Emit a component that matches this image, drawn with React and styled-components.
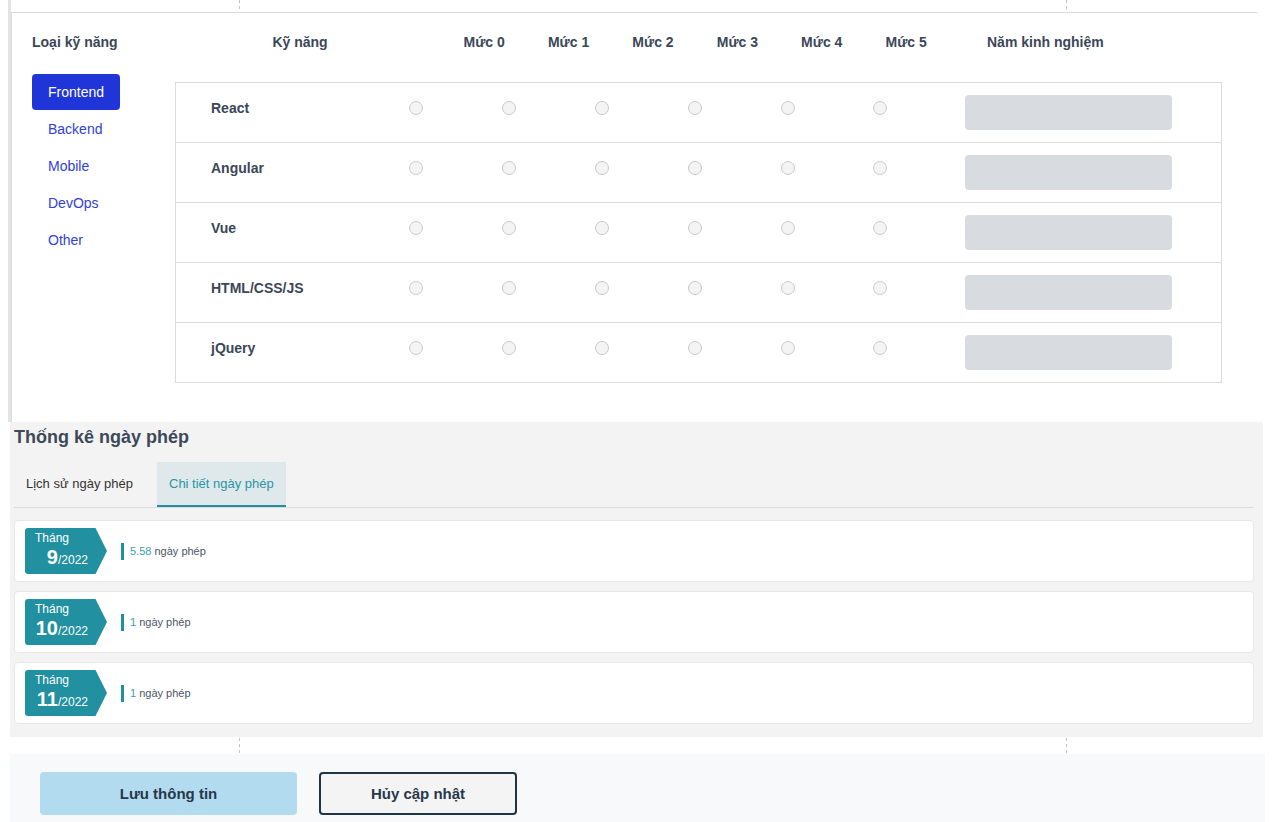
import styled, { createGlobalStyle } from 'styled-components';

const GlobalStyle = createGlobalStyle`
  body {
    margin: 0;
    background: #fff;
    font-family: "Liberation Sans", Arial, sans-serif;
    color: #3b4758;
  }
`;

const skills = ['React', 'Angular', 'Vue', 'HTML/CSS/JS', 'jQuery'];
const categories = ['Frontend', 'Backend', 'Mobile', 'DevOps', 'Other'];
const levels = [0, 1, 2, 3, 4, 5];
const months = [
  { month: 9, days: '5.58' },
  { month: 10, days: '1' },
  { month: 11, days: '1' },
];

const App = () => {
  return (
    <Page>
      <GlobalStyle />
      <SkillPanel>
        <SkillCard>
          <HeaderRow>
            <HeadCell $left>Loại kỹ năng</HeadCell>
            <HeadCell $pad>Kỹ năng</HeadCell>
            {levels.map((l) => (
              <HeadCell key={l}>Mức {l}</HeadCell>
            ))}
            <HeadCell>Năm kinh nghiệm</HeadCell>
          </HeaderRow>
          <Body>
            <Nav>
              {categories.map((c, i) => (
                <NavItem key={c} $active={i === 0}>{c}</NavItem>
              ))}
            </Nav>
            <Table>
              {skills.map((s) => (
                <Row key={s}>
                  <SkillName>{s}</SkillName>
                  {levels.map((l) => (
                    <RadioCell key={l}>
                      <Radio />
                    </RadioCell>
                  ))}
                  <InputCell>
                    <YearInput disabled />
                  </InputCell>
                </Row>
              ))}
            </Table>
          </Body>
        </SkillCard>
      </SkillPanel>

      <LeaveSection>
        <Title>Thống kê ngày phép</Title>
        <Tabs>
          <Tab>Lịch sử ngày phép</Tab>
          <Tab $active>Chi tiết ngày phép</Tab>
        </Tabs>
        <MonthList>
          {months.map((m) => (
            <MonthCard key={m.month}>
              <Badge>
                <BadgeLabel>Tháng</BadgeLabel>
                <BadgeDate>
                  <strong>{m.month}</strong>/2022
                </BadgeDate>
              </Badge>
              <DaysInfo>
                <DaysValue>{m.days}</DaysValue> ngày phép
              </DaysInfo>
            </MonthCard>
          ))}
        </MonthList>
      </LeaveSection>

      <Footer>
        <SaveButton>Lưu thông tin</SaveButton>
        <CancelButton>Hủy cập nhật</CancelButton>
      </Footer>
    </Page>
  );
};

export default App;

const dash = 'repeating-linear-gradient(to bottom, #c4c4c4 0 3px, transparent 3px 6px)';

const Page = styled.div`
  min-height: 822px;
  background:
    ${dash} 239px 0 / 1px 100% no-repeat,
    ${dash} 1066px 0 / 1px 100% no-repeat,
    #fff;
`;

const SkillPanel = styled.div`
  margin-left: 8px;
  padding-top: 12px;
  border-left: 3px solid #e3e3e3;
  width: 1246px;
`;

const SkillCard = styled.div`
  background: #fff;
  border-top: 1px solid #dcdcdc;
  border-left: 1px solid #dcdcdc;
  padding: 19px 0 39px 20px;
`;

const HeaderRow = styled.div`
  display: grid;
  grid-template-columns: 143px 267px repeat(6, 84.4px) 194px;
  align-items: center;
`;

const HeadCell = styled.div`
  font-size: 14px;
  font-weight: 700;
  line-height: 20px;
  color: #3b4758;
  text-align: ${(p) => (p.$left ? 'left' : 'center')};
  padding-right: ${(p) => (p.$pad ? '17px' : '0')};
  white-space: nowrap;
`;

const Body = styled.div`
  display: flex;
  margin-top: 22px;
`;

const Nav = styled.div`
  width: 143px;
  display: flex;
  flex-direction: column;
  align-items: flex-start;
  gap: 1px;
`;

const NavItem = styled.div`
  height: 36px;
  padding: 0 16px;
  display: inline-flex;
  align-items: center;
  font-size: 14px;
  border-radius: 4px;
  color: ${(p) => (p.$active ? '#fff' : '#3040dc')};
  background: ${(p) => (p.$active ? '#2035d8' : 'transparent')};
`;

const Table = styled.div`
  margin-top: 8px;
  width: 1047px;
  border: 1px solid #dcdcdc;
  box-sizing: border-box;
`;

const Row = styled.div`
  display: grid;
  grid-template-columns: 194px repeat(6, 92.8px) 1fr;
  align-items: start;
  height: 59px;
  & + & {
    border-top: 1px solid #dcdcdc;
  }
`;

const SkillName = styled.div`
  padding: 15px 0 0 35px;
  font-size: 14px;
  font-weight: 700;
  line-height: 20px;
  color: #3b4758;
`;

const RadioCell = styled.div`
  display: flex;
  justify-content: center;
  padding-top: 18px;
`;

const Radio = styled.span`
  width: 12px;
  height: 12px;
  border-radius: 50%;
  border: 1px solid #c9c9c9;
  background: #f4f4f4;
`;

const InputCell = styled.div`
  padding: 12px 0 0 38px;
`;

const YearInput = styled.input`
  display: block;
  width: 207px;
  height: 35px;
  border: none;
  border-radius: 4px;
  background: #d8dbe0;
  padding: 0;
`;

const LeaveSection = styled.div`
  margin-left: 10px;
  width: 1253px;
  background: #f3f3f3;
  padding: 4px 9px 13px 4px;
  box-sizing: border-box;
`;

const Title = styled.h2`
  margin: 0;
  font-size: 18px;
  line-height: 22px;
  font-weight: 700;
  color: #3d4959;
`;

const Tabs = styled.div`
  display: flex;
  gap: 12px;
  margin-top: 14px;
  border-bottom: 1px solid #dcdcdc;
`;

const Tab = styled.div`
  height: 43px;
  padding: 0 12px;
  display: flex;
  align-items: center;
  font-size: 13px;
  color: ${(p) => (p.$active ? '#2a95a5' : '#333')};
  background: ${(p) => (p.$active ? '#dfe9ec' : 'transparent')};
  border-bottom: 2px solid ${(p) => (p.$active ? '#2190a0' : 'transparent')};
`;

const MonthList = styled.div`
  display: flex;
  flex-direction: column;
  gap: 9px;
  margin-top: 12px;
`;

const MonthCard = styled.div`
  height: 60px;
  background: #fff;
  border: 1px solid #e8e8e8;
  border-radius: 4px;
  display: flex;
  align-items: center;
  padding-left: 10px;
`;

const Badge = styled.div`
  width: 82px;
  height: 46px;
  box-sizing: border-box;
  padding: 3px 19px 0 10px;
  background: #2190a0;
  color: #fff;
  border-radius: 3px;
  clip-path: polygon(0 0, 86% 0, 100% 50%, 86% 100%, 0 100%);
`;

const BadgeLabel = styled.div`
  font-size: 12px;
  line-height: 14px;
`;

const BadgeDate = styled.div`
  text-align: right;
  font-size: 12px;
  line-height: 24px;
  strong {
    font-size: 20px;
    font-weight: 700;
  }
`;

const DaysInfo = styled.div`
  margin-left: 14px;
  border-left: 3px solid #2190a0;
  padding-left: 6px;
  font-size: 11px;
  line-height: 17px;
  color: #4a5568;
`;

const DaysValue = styled.span`
  color: #3aa0b0;
`;

const Footer = styled.div`
  margin: 17px 0 0 10px;
  width: 1255px;
  height: 68px;
  background: #f7f9fb;
  display: flex;
  gap: 22px;
  padding: 18px 0 0 30px;
  box-sizing: border-box;
  align-items: flex-start;
`;

const Button = styled.button`
  height: 43px;
  border-radius: 4px;
  font-family: "Liberation Sans", Arial, sans-serif;
  font-size: 15px;
  font-weight: 700;
  color: #26374a;
  cursor: pointer;
`;

const SaveButton = styled(Button)`
  width: 257px;
  border: none;
  background: #b3dbf0;
`;

const CancelButton = styled(Button)`
  width: 198px;
  border: 2px solid #1d3547;
  background: #f4f4f4;
`;
